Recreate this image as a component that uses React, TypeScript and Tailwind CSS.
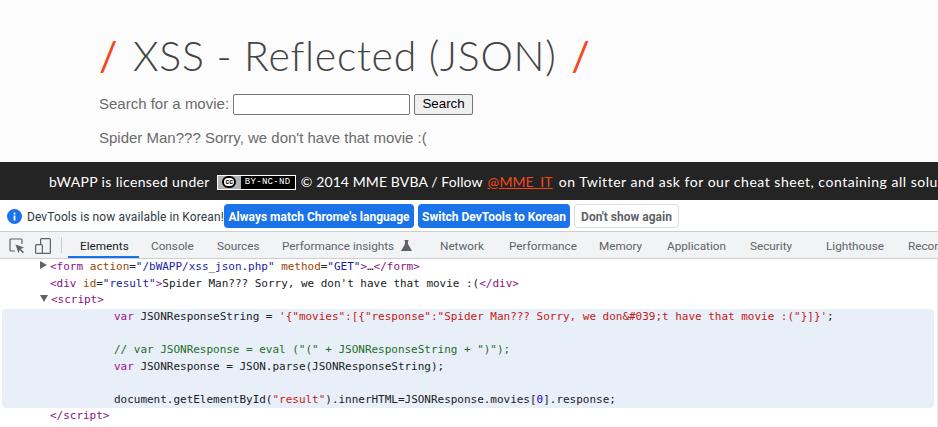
import React from "react";

const Tab = ({ label, active, className = "", children }: { label: string; active?: boolean; className?: string; children?: React.ReactNode }) => (
  <div className={`h-[26px] shrink-0 flex items-center px-3 pt-[5px] whitespace-nowrap border-b-2 ${active ? "border-[#1a73e8] text-[#202124]" : "border-transparent text-[#5f6368]"} ${className}`}>
    {label}
    {children}
  </div>
);

const T = ({ c, children }: { c: "tag" | "attr" | "val"; children: React.ReactNode }) => (
  <span className={c === "tag" ? "text-[#881280]" : c === "attr" ? "text-[#994500]" : "text-[#1a1aa6]"}>{children}</span>
);

const Row = ({ children, arrow, inset = false }: { children?: React.ReactNode; arrow?: "r" | "d"; inset?: boolean }) => (
  <div className={`h-[16.6px] leading-[16.6px] whitespace-pre flex items-center ${inset ? "pl-[112px]" : "pl-[50px]"}`}>
    {arrow === "r" && <span className="-ml-[10px] mr-[3px] -mt-1 w-0 h-0 border-y-[4px] border-y-transparent border-l-[7px] border-l-[#5f6368]" />}
    {arrow === "d" && <span className="-ml-[10px] mr-[3px] -mt-1 w-0 h-0 border-x-[4px] border-x-transparent border-t-[7px] border-t-[#5f6368]" />}
    <span>{children}</span>
  </div>
);

const Kw = ({ children }: { children: React.ReactNode }) => <span className="text-[#aa0d91]">{children}</span>;
const Str = ({ children }: { children: React.ReactNode }) => <span className="text-[#c41a16]">{children}</span>;

export default function App() {
  return (
    <div className="w-[938px] h-[427px] overflow-hidden bg-white flex flex-col font-['Liberation_Sans',sans-serif]">
      <div className="h-[162px] shrink-0 bg-[#fcfcfc] pl-[99px] text-[#6b6b6b] text-[15px]">
        <h1 className="pt-[31px] h-[84px] text-[41px] leading-[50px] font-['Lato',sans-serif] font-light text-[#444] tracking-[0.7px] whitespace-nowrap">
          <span className="text-[#f4481c] font-normal">/</span>
          <span className="mx-[3px]"> XSS - Reflected (JSON) </span>
          <span className="text-[#f4481c] font-normal">/</span>
        </h1>
        <div className="h-[24px] mt-[8px] flex items-center">
          <span>Search for a movie:</span>
          <span className="ml-[4px] w-[177px] h-[21px] bg-white border border-[#767676] rounded-[2px]" />
          <button className="ml-[4px] w-[59px] h-[21px] bg-[#efefef] border border-[#767676] rounded-[2px] text-black text-[13.33px] leading-none">Search</button>
        </div>
        <p className="mt-[13px] leading-[18px]">Spider Man??? Sorry, we don't have that movie :(</p>
      </div>

      <div className="h-[38px] shrink-0 bg-[#242424] pl-[49px] flex items-center whitespace-nowrap text-white text-[14px] font-['Lato',sans-serif] overflow-hidden">
        <span className="tracking-[0.35px]">bWAPP is licensed under</span>
        <span className="ml-[7px] mt-[2px] w-[79px] h-[15px] shrink-0 flex items-center bg-black border border-white">
          <span className="w-[23px] h-full bg-[#b3b3b3] flex items-center justify-center">
            <span className="w-[14px] h-[12px] rounded-full bg-white border-2 border-black text-black text-[7px] font-bold leading-[8px] text-center font-['Liberation_Sans',sans-serif]">cc</span>
          </span>
          <span className="ml-[4px] text-[9px] tracking-[0.3px] font-['Liberation_Mono',monospace] leading-none">BY-NC-ND</span>
        </span>
        <span className="ml-[5px] tracking-[0.1px]">© 2014 MME BVBA / Follow</span>
        <span className="ml-[5px] text-[#f4481c] underline tracking-[0.1px]">@MME_IT</span>
        <span className="ml-[6px] tracking-[0.52px]">on Twitter and ask for our cheat sheet, containing all solutions!</span>
      </div>

      <div className="h-[32px] shrink-0 border-t border-t-white border-b border-b-[#cbcdd1] flex items-center pl-[7px] text-[12px] font-['Roboto',sans-serif]">
        <svg width="15" height="15" viewBox="0 0 15 15" className="shrink-0">
          <circle cx="7.5" cy="7.5" r="7.5" fill="#1a73e8" />
          <rect x="6.6" y="6.5" width="1.8" height="5" fill="#fff" />
          <rect x="6.6" y="3.6" width="1.8" height="1.8" fill="#fff" />
        </svg>
        <span className="ml-[5px] w-[197px] pt-[1px] text-[#303942] whitespace-nowrap tracking-[0.1px]">DevTools is now available in Korean!</span>
        <button className="w-[190px] h-[24px] pt-[1px] bg-[#1a73e8] text-white font-bold rounded-[4px] whitespace-nowrap">Always match Chrome's language</button>
        <button className="ml-[4px] w-[152px] h-[24px] pt-[1px] bg-[#1a73e8] text-white font-bold rounded-[4px] whitespace-nowrap">Switch DevTools to Korean</button>
        <button className="ml-[4px] w-[105px] h-[24px] pt-[1px] bg-white border border-[#dadce0] text-[#5f6368] font-bold rounded-[4px] whitespace-nowrap">Don't show again</button>
      </div>

      <div className="h-[27px] shrink-0 bg-[#f1f3f4] border-b border-[#cbcdd1] flex items-start text-[11.75px] font-['Roboto',sans-serif] overflow-hidden">
        <svg width="16" height="16" viewBox="0 0 16 16" fill="none" className="ml-[9px] mt-[6px] shrink-0">
          <path d="M6 13H2a1 1 0 0 1-1-1V2a1 1 0 0 1 1-1h10a1 1 0 0 1 1 1v4" stroke="#5f6368" strokeWidth="1.2" />
          <path d="M6.5 6.5 15 9.6l-3.2 1.3L15 14l-1.2 1.2-3-3.1-1.3 3.2z" fill="#5f6368" />
        </svg>
        <svg width="16" height="16" viewBox="0 0 16 16" fill="none" className="ml-[10px] mt-[6px] shrink-0">
          <rect x="5.6" y="0.6" width="9.8" height="14.8" rx="1" stroke="#5f6368" strokeWidth="1.2" />
          <rect x="0.6" y="6.6" width="6.8" height="8.8" rx="1" fill="#f1f3f4" stroke="#5f6368" strokeWidth="1.2" />
        </svg>
        <div className="ml-[10px] mr-[6px] mt-[5px] w-px h-[16px] bg-[#cbcdd1] shrink-0" />
        <Tab label="Elements" active className="w-[71px]" />
        <Tab label="Console" className="w-[66px]" />
        <Tab label="Sources" className="w-[65px]" />
        <Tab label="Performance insights" className="w-[158px]">
          <svg width="11" height="11" viewBox="0 0 11 11" className="ml-[7px] -mt-[3px] shrink-0">
            <path d="M3.5 0h4v1H7v3l4 7H0l4-7V1h-.5z" fill="#5f6368" />
          </svg>
        </Tab>
        <Tab label="Network" className="w-[69px]" />
        <Tab label="Performance" className="w-[90px]" />
        <Tab label="Memory" className="w-[68px]" />
        <Tab label="Application" className="w-[83px]" />
        <Tab label="Security" className="w-[66px] mr-[10px]" />
        <Tab label="Lighthouse" className="w-[82px]" />
        <Tab label="Recorder" />
      </div>

      <div className="flex-1 border-r border-[#e5e7eb] text-[11px] tracking-[-0.02px] text-[#202124] font-['DejaVu_Sans_Mono',monospace] overflow-hidden pr-[3px]">
        <Row arrow="r"><T c="tag">&lt;form</T> <T c="attr">action</T>=<T c="val">"/bWAPP/xss_json.php"</T> <T c="attr">method</T>=<T c="val">"GET"</T><T c="tag">&gt;</T>…<T c="tag">&lt;/form&gt;</T></Row>
        <Row><T c="tag">&lt;div</T> <T c="attr">id</T>=<T c="val">"result"</T><T c="tag">&gt;</T>Spider Man??? Sorry, we don't have that movie :(<T c="tag">&lt;/div&gt;</T></Row>
        <Row arrow="d"><T c="tag">&lt;script&gt;</T></Row>
        <div className="ml-[2px] bg-[#e8eff9] rounded-[4px]">
          <Row inset><Kw>var</Kw> JSONResponseString = <Str>{`'{"movies":[{"response":"Spider Man??? Sorry, we don&#039;t have that movie :("}]}'`}</Str>;</Row>
          <Row inset />
          <Row inset><span className="text-[#236e25]">{`// var JSONResponse = eval ("(" + JSONResponseString + ")");`}</span></Row>
          <Row inset><Kw>var</Kw> JSONResponse = JSON.parse(JSONResponseString);</Row>
          <Row inset />
          <Row inset>document.getElementById(<Str>"result"</Str>).innerHTML=JSONResponse.movies[<span className="text-[#1c00cf]">0</span>].response;</Row>
        </div>
        <Row><T c="tag">&lt;/script&gt;</T></Row>
      </div>
    </div>
  );
}
